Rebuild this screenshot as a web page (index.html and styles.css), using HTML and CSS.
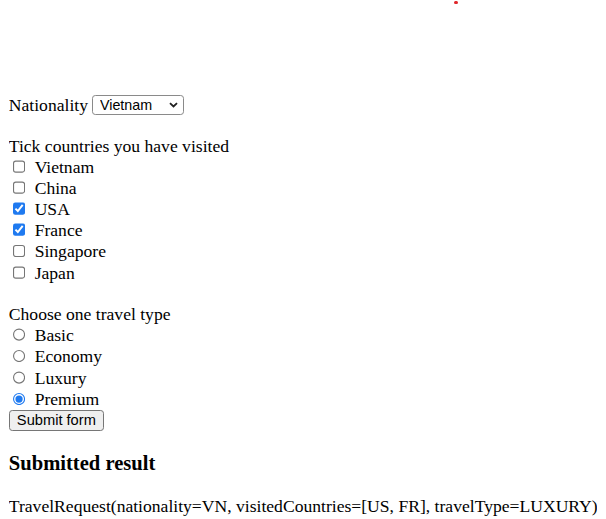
FILE: index.html
```html
<!DOCTYPE html>
<html>
<head>
<meta charset="utf-8">
<link rel="stylesheet" href="styles.css">
</head>
<body>
<span class="dot"></span>
<div class="spacer"></div>
<form class="form">
  <div class="line sel-line">Nationality <select class="sel"><option>Vietnam</option><option>China</option><option>USA</option><option>France</option><option>Singapore</option><option>Japan</option></select></div>
  <div class="blank"></div>
  <div class="line">Tick countries you have visited</div>
  <label class="opt"><input type="checkbox"><span>Vietnam</span></label>
  <label class="opt"><input type="checkbox"><span>China</span></label>
  <label class="opt"><input type="checkbox" checked><span>USA</span></label>
  <label class="opt"><input type="checkbox" checked><span>France</span></label>
  <label class="opt"><input type="checkbox"><span>Singapore</span></label>
  <label class="opt"><input type="checkbox"><span>Japan</span></label>
  <div class="blank blank-2"></div>
  <div class="line">Choose one travel type</div>
  <label class="opt opt-radio"><input type="radio" name="t"><span>Basic</span></label>
  <label class="opt opt-radio"><input type="radio" name="t"><span>Economy</span></label>
  <label class="opt opt-radio"><input type="radio" name="t"><span>Luxury</span></label>
  <label class="opt opt-radio"><input type="radio" name="t" checked><span>Premium</span></label>
  <div class="btn-line"><button type="button" class="btn">Submit form</button></div>
</form>
<h3 class="title">Submitted result</h3>
<p class="result">TravelRequest(nationality=VN, visitedCountries=[US, FR], travelType=LUXURY)</p>
</body>
</html>
```
FILE: styles.css
```css
html { background: #fff; zoom: 1.1; }
body {
  margin: 8px;
  font-family: "Liberation Serif", "Times New Roman", serif;
  font-size: 16px;
  line-height: 18.4px;
  color: #000;
}
.dot {
  position: absolute;
  left: 413px;
  top: 1px;
  width: 3px;
  height: 3px;
  background: #e0262a;
  border-radius: 50%;
}
.spacer { height: 77.5px; }
.blank { height: 18px; }
.blank-2 { height: 18.9px; }
.line { height: 18.4px; white-space: nowrap; }
.sel-line {
  height: 20px;
  display: flex;
  align-items: center;
}
.sel {
  appearance: none;
  -webkit-appearance: none;
  margin: 0 0 0 4px;
  box-sizing: border-box;
  width: 83px;
  height: 17.5px;
  padding: 0 0 0 6px;
  border: 1px solid #8a8a8a;
  border-radius: 3px;
  background: #fff url("data:image/svg+xml,%3Csvg xmlns='http://www.w3.org/2000/svg' width='9' height='6' viewBox='0 0 9 6'%3E%3Cpath d='M1 1l3.5 3.5L8 1' fill='none' stroke='%23222' stroke-width='1.8'/%3E%3C/svg%3E") no-repeat right 4px center / 8px 5.5px;
  font-family: "Liberation Sans", Arial, sans-serif;
  font-size: 13px;
  line-height: 15px;
  color: #000;
}
.opt {
  display: flex;
  align-items: center;
  height: 19.3px;
  white-space: nowrap;
}
.opt-radio { height: 19.5px; }
.opt input {
  width: 12.5px;
  height: 12.5px;
  margin: 0 7.5px 0 3.5px;
  accent-color: #1f7af0;
}
.btn-line {
  height: 19px;
  display: flex;
  align-items: center;
}
.btn {
  box-sizing: border-box;
  height: 19px;
  width: 86.5px;
  margin: 0;
  padding: 0 6px;
  border: 1px solid #767676;
  border-radius: 3px;
  background: #efefef;
  font-family: "Liberation Sans", Arial, sans-serif;
  font-size: 13.33px;
  line-height: 15px;
  color: #000;
}
.title {
  font-size: 18.72px;
  line-height: 21.5px;
  margin: 18.72px 0;
  white-space: nowrap;
}
.result { margin: 18.72px 0; white-space: nowrap; }
```
